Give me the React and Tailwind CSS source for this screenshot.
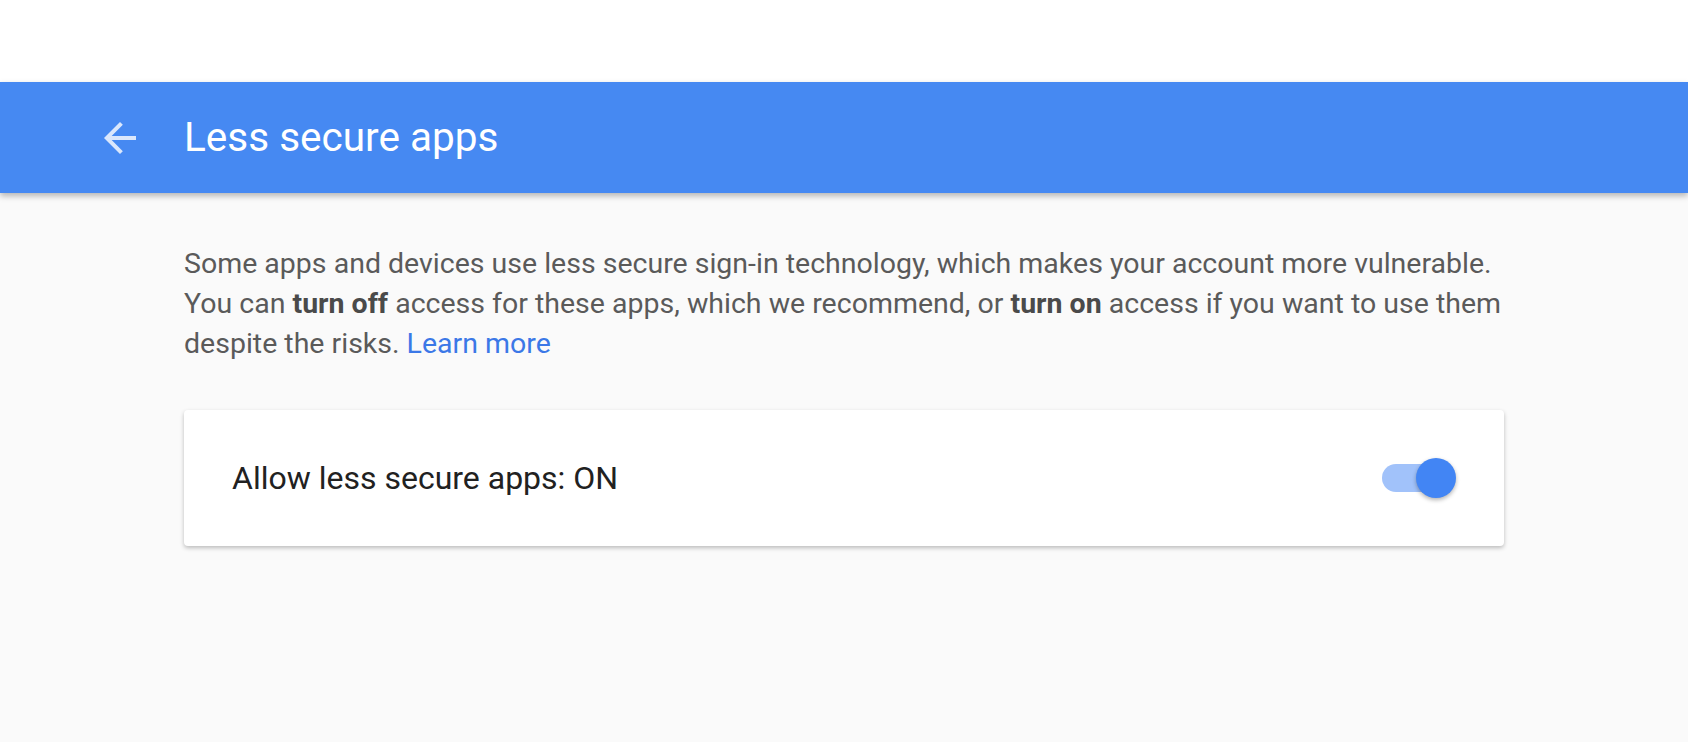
import React from 'react';

const BackArrow = () => (
  <svg viewBox="0 0 24 24" width="48" height="48" className="fill-white/80">
    <path d="M20 11H7.83l5.59-5.59L12 4l-8 8 8 8 1.41-1.41L7.83 13H20v-2z" />
  </svg>
);

const Toggle = ({ on }) => (
  <div className="relative w-[74px] h-[40px] flex items-center">
    <div className={`w-[68px] h-[28px] rounded-full ${on ? 'bg-[#a1c2fa]' : 'bg-gray-300'}`} />
    <div
      className={`absolute top-0 w-[40px] h-[40px] rounded-full shadow-[0_2px_4px_rgba(0,0,0,0.3)] ${on ? 'right-0 bg-[#4285f4]' : 'left-0 bg-white'}`}
    />
  </div>
);

export default function App() {
  return (
    <div className="min-h-screen bg-[#fafafa] font-['Roboto','Liberation_Sans',sans-serif]">
      <div className="h-[82px] bg-white" />

      {/* top bar */}
      <header className="relative z-10 h-[111px] bg-[#4689f2] flex items-center pl-[96px] shadow-[0_3px_6px_rgba(0,0,0,0.28)]">
        <button className="w-[48px] h-[48px] flex items-center justify-center">
          <BackArrow />
        </button>
        <h1 className="ml-[40px] text-[40.5px] leading-none font-normal text-white">Less secure apps</h1>
      </header>

      <main className="w-[1320px] mx-auto pt-[51px]">
        <p className="text-[28.5px] leading-[39.8px] text-[#5a5a5a]">
          Some apps and devices use less secure sign-in technology, which makes your account more vulnerable.
          You can <b className="font-bold text-[#4a4a4a]">turn off</b> access for these apps, which we recommend, or{' '}
          <b className="font-bold text-[#4a4a4a]">turn on</b> access if you want to use them despite the risks.{' '}
          <a href="#" className="text-[#3b78e7]">Learn more</a>
        </p>

        <div className="mt-[47px] h-[136px] bg-white rounded-[4px] shadow-[0_2px_4px_rgba(0,0,0,0.25)] flex items-center justify-between pl-[48px] pr-[48px]">
          <span className="text-[32px] text-[#212121]">Allow less secure apps: ON</span>
          <Toggle on />
        </div>
      </main>
    </div>
  );
}
